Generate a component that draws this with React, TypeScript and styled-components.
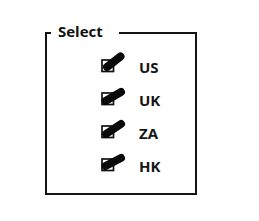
import React from "react";
import styled, { createGlobalStyle } from "styled-components";

const Global = createGlobalStyle`
  html, body { margin: 0; padding: 0; background: #ffffff; }
  body { font-family: "Open Sans", "DejaVu Sans", sans-serif; }
`;

const Page = styled.div`
  padding: 24px 0 0 45px;
  width: 259px;
  height: 221px;
  box-sizing: border-box;
`;

const Frame = styled.fieldset`
  margin: 0;
  padding: 8px 0 11px 0;
  width: 152px;
  box-sizing: border-box;
  border: 2px solid #141414;
  min-inline-size: 0;
`;

const Legend = styled.legend`
  margin-left: 4px;
  padding: 0 16px 4px 7px;
  font-family: "Open Sans", "DejaVu Sans", sans-serif;
  font-weight: 700;
  font-size: 15px;
  line-height: 14px;
  color: #111;
`;

const List = styled.div`
  display: flex;
  flex-direction: column;
`;

const Row = styled.label`
  display: flex;
  align-items: center;
  height: 33px;
  padding-left: 53px;
  gap: 13px;
`;

const Mark = styled.svg`
  display: block;
  width: 26px;
  height: 26px;
  overflow: visible;
  flex: none;
`;

const Label = styled.span`
  font-family: "Open Sans", "DejaVu Sans", sans-serif;
  font-weight: 700;
  font-size: 15px;
  line-height: 14px;
  color: #151515;
`;

type Stroke = { x1: number; y1: number; x2: number; y2: number };

const Check: React.FC<Stroke> = ({ x1, y1, x2, y2 }) => (
  <Mark viewBox="0 0 26 26" aria-hidden="true">
    <rect x="2" y="6" width="11.5" height="11.5" fill="#fff" stroke="#111" strokeWidth="1.7" />
    <line x1={x1} y1={y1} x2={x2} y2={y2} stroke="#0a0a0a" strokeWidth="8" strokeLinecap="round" />
  </Mark>
);

const items: { code: string; s: Stroke }[] = [
  { code: "US", s: { x1: 7, y1: 13, x2: 20.5, y2: 2.5 } },
  { code: "UK", s: { x1: 5.5, y1: 14, x2: 21, y2: 5 } },
  { code: "ZA", s: { x1: 6, y1: 14, x2: 21, y2: 4 } },
  { code: "HK", s: { x1: 5.5, y1: 13, x2: 21, y2: 5 } },
];

export default function App() {
  return (
    <>
      <Global />
      <Page>
        <Frame>
          <Legend>Select</Legend>
          <List>
            {items.map((it) => (
              <Row key={it.code}>
                <Check {...it.s} />
                <Label>{it.code}</Label>
              </Row>
            ))}
          </List>
        </Frame>
      </Page>
    </>
  );
}
